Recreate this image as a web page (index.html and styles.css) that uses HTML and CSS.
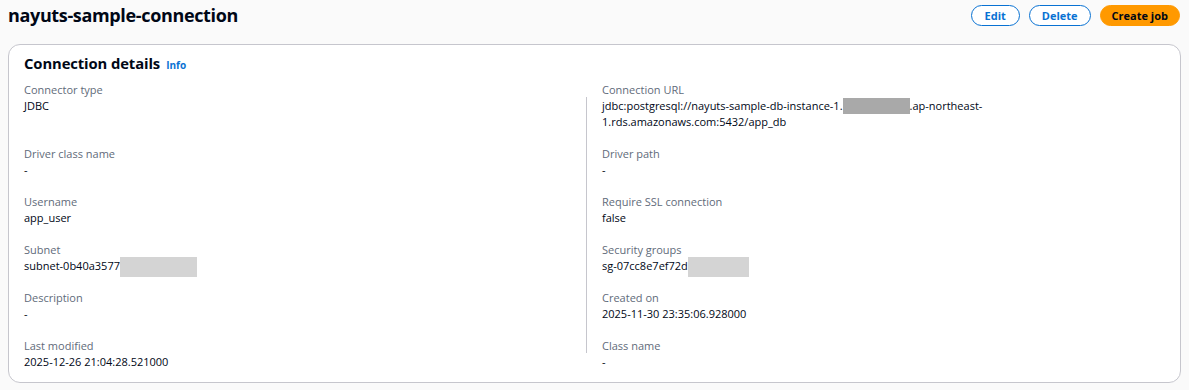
FILE: index.html
```html
<!DOCTYPE html>
<html>
<head>
<meta charset="utf-8">
<link rel="stylesheet" href="styles.css">
</head>
<body>
<div class="page-header">
  <h1 class="title">nayuts-sample-connection</h1>
  <div class="actions">
    <button class="btn btn-normal btn-edit">Edit</button>
    <button class="btn btn-normal">Delete</button>
    <button class="btn btn-primary">Create job</button>
  </div>
</div>
<section class="card">
  <div class="card-header">
    <h2 class="card-title">Connection details</h2>
    <a class="info">Info</a>
  </div>
  <div class="grid">
    <div class="field c-left r-1"><div class="label">Connector type</div><div class="value">JDBC</div></div>
    <div class="divider"></div>
    <div class="field c-right r-1"><div class="label">Connection URL</div><div class="value">jdbc:postgresql://nayuts-sample-db-instance-1.<span class="redact-dark"></span>.ap-northeast-<br>1.rds.amazonaws.com:5432/app_db</div></div>

    <div class="field c-left"><div class="label">Driver class name</div><div class="value">-</div></div>
    <div class="field c-right"><div class="label">Driver path</div><div class="value">-</div></div>

    <div class="field c-left"><div class="label">Username</div><div class="value">app_user</div></div>
    <div class="field c-right"><div class="label">Require SSL connection</div><div class="value">false</div></div>

    <div class="field c-left"><div class="label">Subnet</div><div class="value">subnet-0b40a3577<span class="redact-light r-subnet"></span></div></div>
    <div class="field c-right"><div class="label">Security groups</div><div class="value">sg-07cc8e7ef72d<span class="redact-light r-sg"></span></div></div>

    <div class="field c-left"><div class="label">Description</div><div class="value">-</div></div>
    <div class="field c-right"><div class="label">Created on</div><div class="value">2025-11-30 23:35:06.928000</div></div>

    <div class="field c-left"><div class="label">Last modified</div><div class="value">2025-12-26 21:04:28.521000</div></div>
    <div class="field c-right"><div class="label">Class name</div><div class="value">-</div></div>
  </div>
</section>
</body>
</html>
```
FILE: styles.css
```css
html, body {
  margin: 0;
  padding: 0;
  background: #fafafa;
}
body {
  padding: 0 8px;
  font-family: "Open Sans", "Noto Sans", "Liberation Sans", sans-serif;
  color: #000716;
}
.page-header {
  display: flex;
  align-items: center;
  justify-content: space-between;
  height: 30px;
}
.title {
  margin: 0;
  font-size: 18px;
  line-height: 24px;
  font-weight: 700;
  letter-spacing: -0.35px;
  color: #000716;
}
.actions {
  display: flex;
  gap: 9px;
  padding-right: 1px;
}
.btn {
  font-family: inherit;
  font-size: 11px;
  font-weight: 700;
  height: 21px;
  line-height: 17px;
  padding: 0 12px;
  border-radius: 12px;
  cursor: pointer;
}
.btn-edit {
  padding: 0 13px;
}
.btn-normal {
  background: #ffffff;
  color: #0972d3;
  border: 1.5px solid #0972d3;
}
.btn-primary {
  background: #ff9900;
  color: #000716;
  border: 1.5px solid #ff9900;
  padding: 0 11px;
}
.card {
  margin-top: 14px;
  background: #ffffff;
  border: 1px solid #c6c6cd;
  border-radius: 12px;
  padding: 8px 31px 12px 15px;
}
.card-header {
  display: flex;
  align-items: baseline;
  gap: 6px;
  height: 20px;
  margin-bottom: 9px;
}
.card-title {
  margin: 0;
  font-size: 14.8px;
  line-height: 20px;
  font-weight: 700;
  letter-spacing: -0.1px;
}
.info {
  font-size: 10px;
  font-weight: 700;
  color: #0972d3;
}
.grid {
  display: grid;
  grid-template-columns: 1fr 1px 1fr;
  column-gap: 15px;
  row-gap: 16px;
}
.c-left { grid-column: 1; }
.c-right { grid-column: 3; }
.r-1 { grid-row: 1; }
.divider {
  grid-column: 2;
  grid-row: 1 / 7;
  background: #c6c6cd;
  margin: 15px 0 17px;
}
.field {
  font-size: 11px;
  line-height: 16px;
}
.label {
  color: #5f6b7a;
}
.value {
  color: #000716;
}
.redact-dark {
  display: inline-block;
  width: 67px;
  height: 16px;
  vertical-align: top;
  background: #a9a9a9;
}
.redact-light {
  display: inline-block;
  height: 20px;
  margin: -1px 0 -3px;
  vertical-align: top;
  background: #d4d4d4;
}
.r-subnet { width: 77px; }
.r-sg { width: 61px; }
```
